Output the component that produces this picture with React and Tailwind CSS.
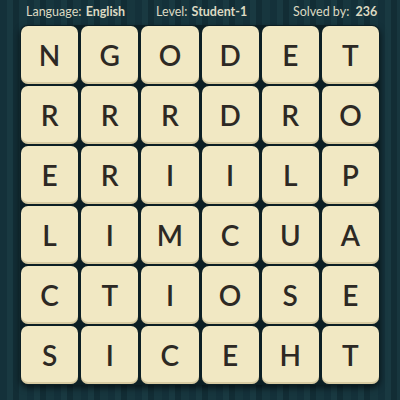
import React from "react";

const rows = ["NGODET", "RRRDRO", "ERIILP", "LIMCUA", "CTIOSE", "SICEHT"];

export default function App() {
  return (
    <div
      className="w-[400px] h-[400px] overflow-hidden bg-[#15323a] bg-[repeating-linear-gradient(90deg,#14313a_0px,#14313a_7px,#193941_7px,#193941_13px,#122d35_13px,#122d35_19px,#17363e_19px,#17363e_27px)]"
      style={{ fontFamily: "Lato, 'Open Sans', sans-serif" }}
    >
      <div className="h-[25px] flex items-center pl-[26px] text-[12.5px] text-[#dcd9c2] leading-none pb-[1px]">
        <div className="w-[130px] whitespace-nowrap">
          Language: <span className="font-bold ml-[1px]">English</span>
        </div>
        <div className="w-[137px] whitespace-nowrap">
          Level: <span className="font-bold ml-[1px]">Student-1</span>
        </div>
        <div className="whitespace-nowrap">
          Solved by: <span className="font-bold ml-[3px]">236</span>
        </div>
      </div>
      <div className="ml-[20px] w-[360px] grid grid-cols-6 gap-x-[3px] gap-y-[2px] p-[1px] bg-[#0c1f24] rounded-[8px] shadow-[0_3px_6px_rgba(0,0,0,0.6)]">
        {rows.join("").split("").map((ch, i) => (
          <div
            key={i}
            className="h-[58px] rounded-[7px] bg-[#f1e8c3] shadow-[inset_0_-2px_0_rgba(170,150,100,0.35)] flex items-center justify-center text-[28px] font-semibold text-[#2d2924]"
          >
            {ch}
          </div>
        ))}
      </div>
    </div>
  );
}
